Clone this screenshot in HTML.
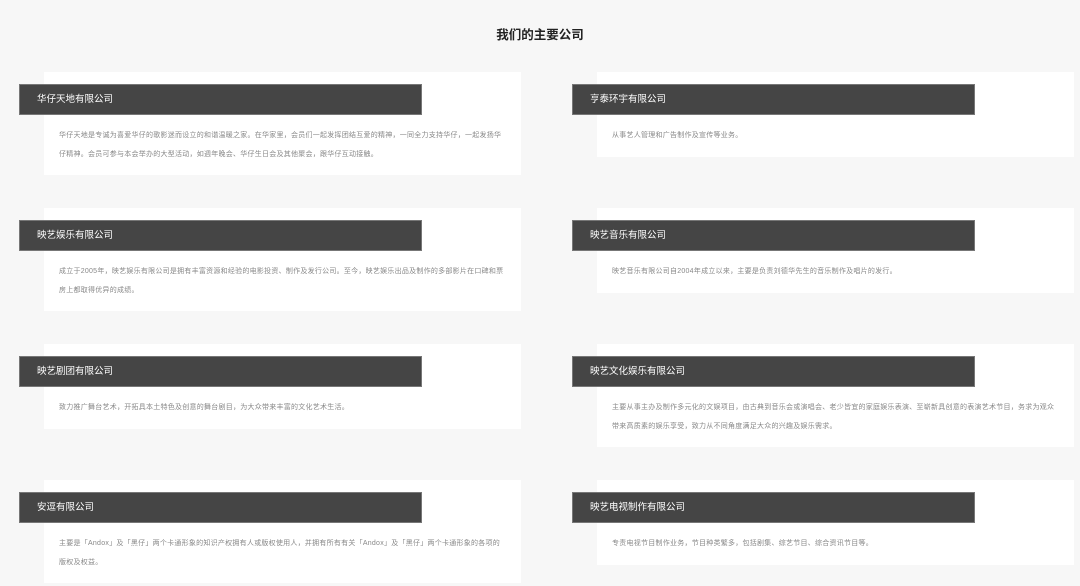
<!DOCTYPE html>
<html><head><meta charset="utf-8"><style>
*{margin:0;padding:0;box-sizing:border-box}
body{width:1080px;height:586px;background:#f7f7f7;position:relative;overflow:hidden;font-family:"Liberation Sans","Noto Sans CJK SC",sans-serif}
h1{position:absolute;top:24px;left:0;width:1080px;text-align:center;font-size:12.5px;font-weight:bold;color:#222}
.card{position:absolute;background:#fff;width:477px}
.bar{position:absolute;left:-25px;top:12px;width:403px;height:31px;background:#454545;border:1px solid #777;color:#fff;font-size:9.5px;line-height:29px;padding-left:17px}
.txt{position:absolute;left:15px;top:54px;white-space:nowrap;font-size:7px;line-height:19px;color:#888;letter-spacing:0.25px}
</style></head><body>
<h1>我们的主要公司</h1>
<div class="card" style="left:44px;top:72px;height:103px"><div class="bar">华仔天地有限公司</div><div class="txt">华仔天地是专诚为喜爱华仔的歌影迷而设立的和谐温暖之家。在华家里，会员们一起发挥团结互爱的精神，一同全力支持华仔，一起发扬华<br>仔精神。会员可参与本会举办的大型活动，如週年晚会、华仔生日会及其他聚会，跟华仔互动接触。</div></div>
<div class="card" style="left:597px;top:72px;height:85px"><div class="bar">亨泰环宇有限公司</div><div class="txt">从事艺人管理和广告制作及宣传等业务。</div></div>
<div class="card" style="left:44px;top:208px;height:103px"><div class="bar">映艺娱乐有限公司</div><div class="txt">成立于2005年，映艺娱乐有限公司是拥有丰富资源和经验的电影投资、制作及发行公司。至今，映艺娱乐出品及制作的多部影片在口碑和票<br>房上都取得优异的成绩。</div></div>
<div class="card" style="left:597px;top:208px;height:85px"><div class="bar">映艺音乐有限公司</div><div class="txt">映艺音乐有限公司自2004年成立以来，主要是负责刘德华先生的音乐制作及唱片的发行。</div></div>
<div class="card" style="left:44px;top:344px;height:85px"><div class="bar">映艺剧团有限公司</div><div class="txt">致力推广舞台艺术，开拓具本土特色及创意的舞台剧目，为大众带来丰富的文化艺术生活。</div></div>
<div class="card" style="left:597px;top:344px;height:103px"><div class="bar">映艺文化娱乐有限公司</div><div class="txt">主要从事主办及制作多元化的文娱项目，由古典到音乐会或演唱会、老少皆宜的家庭娱乐表演、至崭新具创意的表演艺术节目，务求为观众<br>带来高质素的娱乐享受，致力从不同角度满足大众的兴趣及娱乐需求。</div></div>
<div class="card" style="left:44px;top:480px;height:103px"><div class="bar">安逗有限公司</div><div class="txt">主要是「Andox」及「黑仔」两个卡通形象的知识产权拥有人或版权使用人，并拥有所有有关「Andox」及「黑仔」两个卡通形象的各项的<br>版权及权益。</div></div>
<div class="card" style="left:597px;top:480px;height:85px"><div class="bar">映艺电视制作有限公司</div><div class="txt">专责电视节目制作业务，节目种类繁多，包括剧集、综艺节目、综合资讯节目等。</div></div>
</body></html>
